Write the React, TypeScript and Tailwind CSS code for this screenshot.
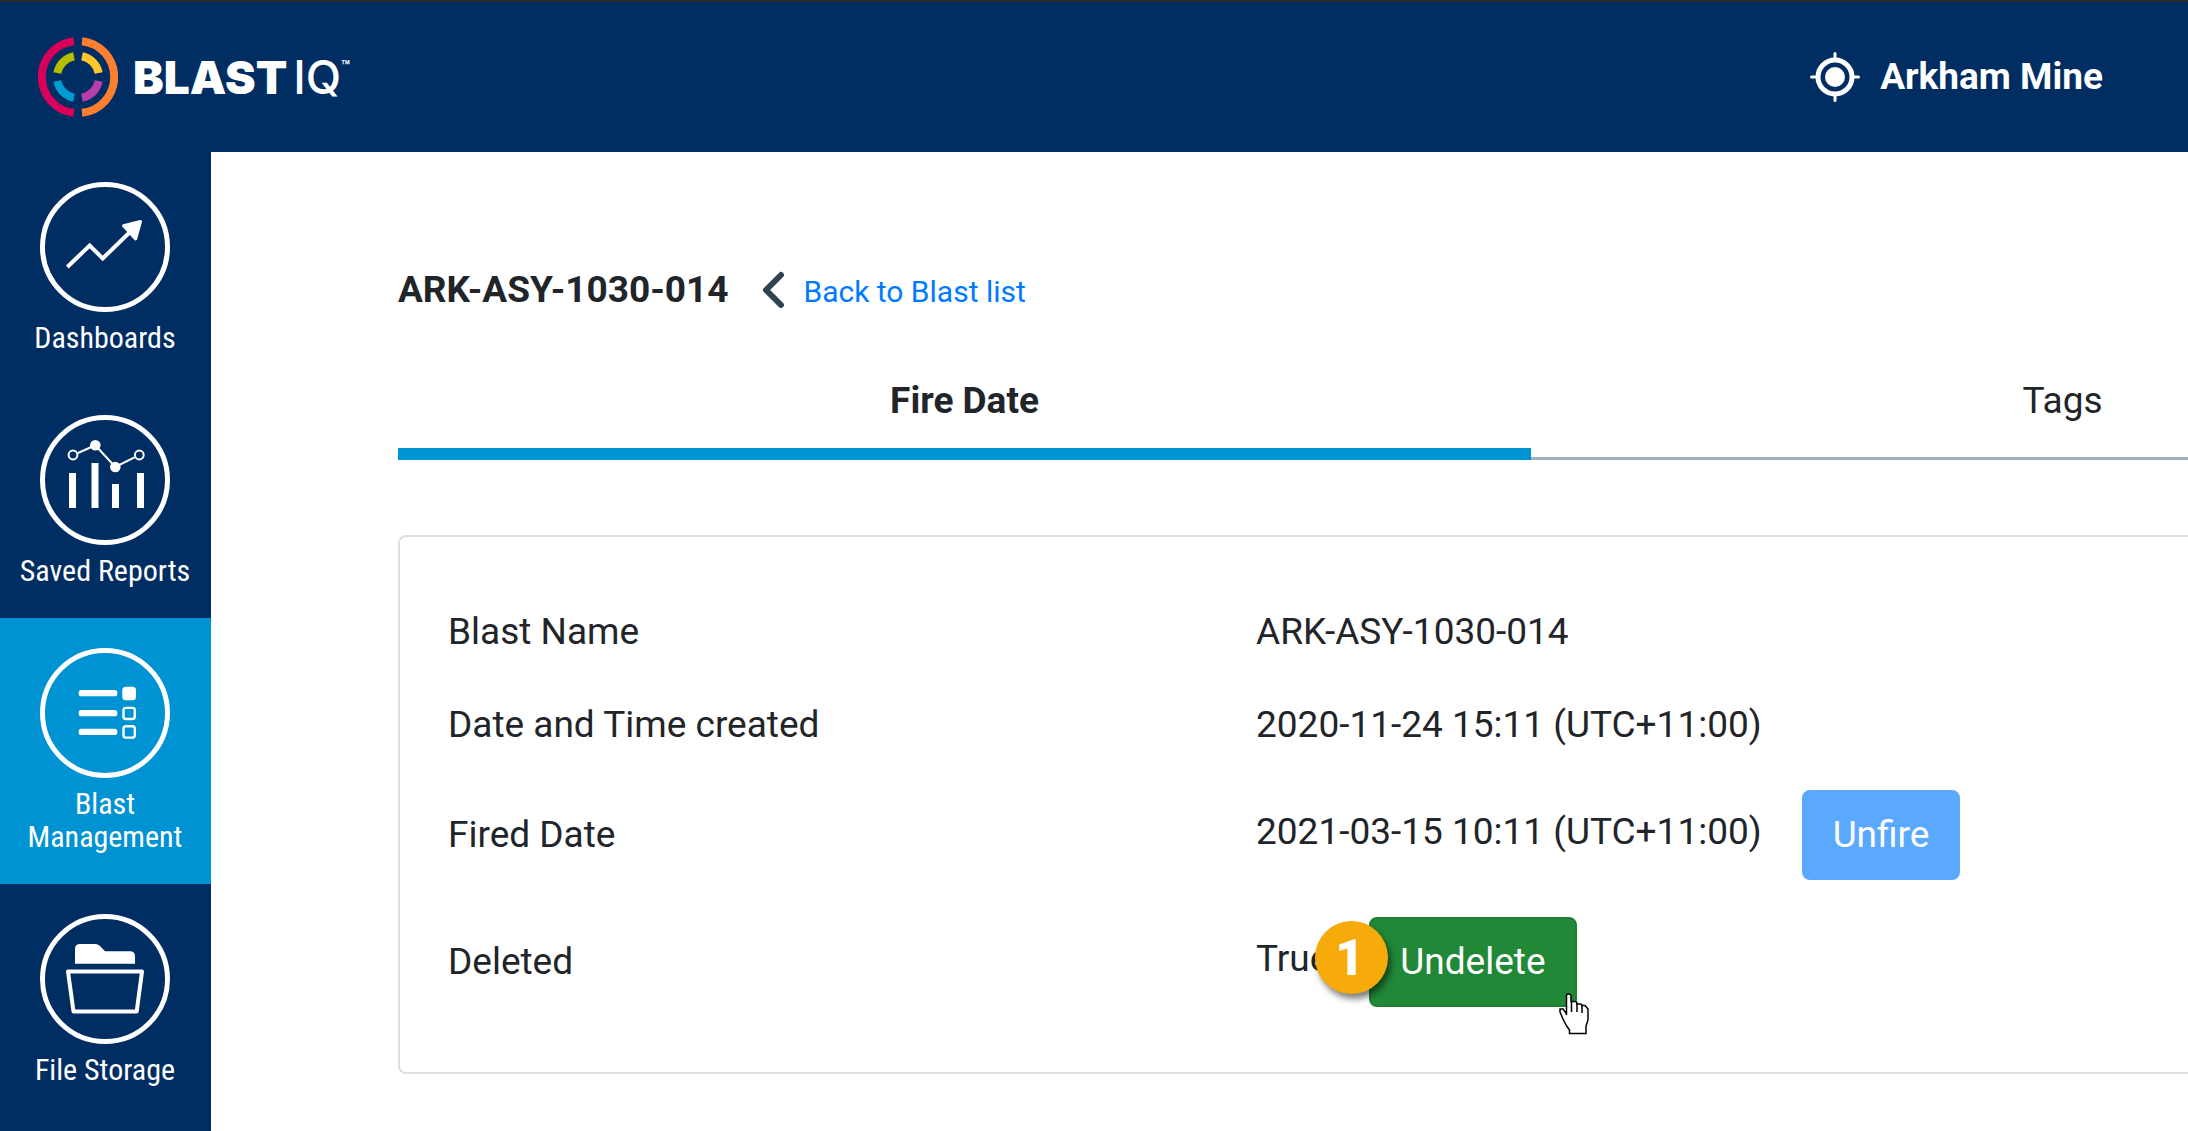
import type { ReactNode } from 'react';

interface NavItem {
  label: string;
  icon: ReactNode;
  active?: boolean;
}

function DashboardsIcon() {
  return (
    <>
      <path d="M27.3 85 49.7 63.5 62.7 76.5 90 50" fill="none" stroke="currentColor" strokeWidth="4" />
      <path d="M100.5 39.5 83.5 43.8 95.6 57Z" fill="currentColor" stroke="currentColor" strokeWidth="3" strokeLinejoin="round" />
    </>
  );
}

function ReportsIcon() {
  return (
    <>
      <path d="M38 38 55.3 30.3 75.3 52 94.5 42.3" fill="none" stroke="currentColor" strokeWidth="2" />
      <g fill="currentColor">
        <circle cx="55.3" cy="30.3" r="5.3" />
        <circle cx="75.3" cy="52" r="5.3" />
        <rect x="29" y="58" width="7" height="35" />
        <rect x="51.5" y="48" width="7" height="45" />
        <rect x="72" y="69" width="7" height="24" />
        <rect x="97" y="58" width="7" height="35" />
      </g>
      <g fill="none" stroke="currentColor" strokeWidth="2">
        <circle cx="33" cy="40" r="4.4" />
        <circle cx="99.3" cy="40" r="4.4" />
      </g>
    </>
  );
}

function BlastIcon() {
  return (
    <>
      <g fill="currentColor">
        <rect x="38.7" y="42" width="38.6" height="6.3" rx="2.6" />
        <rect x="38.7" y="62" width="38.6" height="6.3" rx="2.6" />
        <rect x="38.7" y="80.7" width="38.6" height="6.3" rx="2.6" />
        <rect x="82.3" y="38.7" width="13.7" height="13.5" rx="3.5" />
      </g>
      <g fill="none" stroke="currentColor" strokeWidth="2.4">
        <rect x="83.5" y="59.9" width="11.3" height="11.1" rx="2.4" />
        <rect x="83.5" y="78.3" width="11.3" height="11.3" rx="2.4" />
      </g>
    </>
  );
}

function StorageIcon() {
  return (
    <>
      <path d="M35 49.7V35q0-5 5-5h15q3 0 5 2l5 5.3h25q5 0 5 5v7.4Z" fill="currentColor" />
      <path d="M28 57.5H102L96.7 97.5H33.5Z" fill="none" stroke="currentColor" strokeWidth="4" strokeLinejoin="round" />
    </>
  );
}

const navItems: NavItem[] = [
  { label: 'Dashboards', icon: <DashboardsIcon /> },
  { label: 'Saved Reports', icon: <ReportsIcon /> },
  { label: 'Blast Management', icon: <BlastIcon />, active: true },
  { label: 'File Storage', icon: <StorageIcon /> },
];

function Logo() {
  return (
    <a href="#" className="flex items-center gap-[15px] text-white">
      <svg viewBox="0 0 80 80" className="h-20 w-20" fill="none">
        <g strokeWidth="8">
          <path d="M36 4.2a36 36 0 0 0 0 71.6" stroke="#d9005b" />
          <path d="M44 4.2a36 36 0 0 1 0 71.6" stroke="#ff7f30" />
          <path d="M36 19.3A21 21 0 0 0 19.3 36" stroke="#b4bd00" />
          <path d="M44 19.3A21 21 0 0 1 60.7 36" stroke="#ffc729" />
          <path d="M36 60.7A21 21 0 0 1 19.3 44" stroke="#009bd2" />
          <path d="M44 60.7A21 21 0 0 0 60.7 44" stroke="#b93cab" />
        </g>
      </svg>
      <span className="flex items-start font-['Inter',sans-serif] text-[46px] leading-[46px]">
        <span className="font-black">BLAST</span>
        <span className="pl-1.5 font-medium">IQ</span>
        <span className="text-[14px] leading-6 font-bold">™</span>
      </span>
    </a>
  );
}

function TargetIcon() {
  return (
    <svg viewBox="0 0 50 50" className="h-[50px] w-[50px]" fill="none" stroke="currentColor">
      <circle cx="25" cy="25" r="17" strokeWidth="5" />
      <circle cx="25" cy="25" r="10" fill="currentColor" stroke="none" />
      <path d="M25 1.5V7M25 43v5.5M1.5 25H7M43 25h5.5" strokeWidth="3" strokeLinecap="round" />
    </svg>
  );
}

function HandCursor() {
  return (
    <svg viewBox="0 0 30 42" className="absolute -right-[14px] top-[74px] h-[42px] w-[30px]">
      <path
        d="M7.5 22V2.5Q7.5 1 9.5 1T12 2.5V8.5H16Q18 8.5 18 11H21Q23 11 23 12.5H26L29 16V27L27 33V40.5H10.5V37L8 33.5 4 26 1 19V16H4L7 20Z"
        fill="#fff"
        stroke="#000"
        strokeWidth="1.5"
      />
      <path d="M12.5 8V19M18 10V19M23 12V20" stroke="#000" strokeWidth="1.5" />
    </svg>
  );
}

export default function App() {
  return (
    <div className="flex min-h-screen flex-col overflow-hidden bg-white font-['Roboto',sans-serif] text-[37px] leading-[56px] text-[#212529]">
      {/* Top bar */}
      <header className="flex h-[152px] items-center justify-between border-t-2 border-[#2b2b2b] bg-[#002d62] pr-[85px] pl-[38px] text-white">
        <Logo />
        <div className="flex items-center gap-5 font-bold">
          <TargetIcon />
          <span>Arkham Mine</span>
        </div>
      </header>

      <div className="flex grow">
        {/* Sidebar */}
        <nav className="w-[211px] shrink-0 bg-[#002d62] text-white">
          {navItems.map(item => (
            <a
              key={item.label}
              href="#"
              className={`flex flex-col items-center gap-[9px] pt-[30px] pr-2 pb-[31px] pl-[7px] text-center font-['Roboto_Condensed','Roboto',sans-serif] text-[30px] leading-[33px] ${item.active ? 'bg-[#0093d3]' : ''}`}
            >
              <svg viewBox="0 0 130 130" className="h-[130px] w-[130px]">
                <circle cx="65" cy="65" r="62.5" fill="none" stroke="currentColor" strokeWidth="5" />
                {item.icon}
              </svg>
              <span>{item.label}</span>
            </a>
          ))}
        </nav>

        <main className="min-w-0 grow overflow-hidden pt-[110px] pl-[187px]">
          {/* Title row */}
          <div className="flex items-start">
            <h1 className="font-bold">ARK-ASY-1030-014</h1>
            <a href="#" className="flex h-14 items-center gap-[18px] pl-[33px] text-[30px] text-[#007bff]">
              <svg viewBox="0 0 24 38" className="h-[38px] w-6" fill="none" stroke="#2f4350" strokeWidth="6" strokeLinecap="round" strokeLinejoin="round">
                <path d="M20 4 5 19 20 34" />
              </svg>
              <span className="pt-1">Back to Blast list</span>
            </a>
          </div>

          {/* Tabs */}
          <div role="tablist" className="mt-[54px] flex h-[88px]">
            <button role="tab" aria-selected="true" className="w-[1133px] shrink-0 border-b-[12px] border-[#0093d3] pb-[18px] font-bold">
              Fire Date
            </button>
            <button role="tab" aria-selected="false" className="w-[1063px] shrink-0 border-b-[3px] border-[#9eb0bb] pb-[27px]">
              Tags
            </button>
          </div>

          {/* Blast details */}
          <dl className="mt-[75px] grid grid-cols-[808px_1fr] items-center gap-y-[37px] rounded-l-lg border-2 border-r-0 border-[#dfdfdf] pt-[67px] pb-[65px] pl-12">
            <dt>Blast Name</dt>
            <dd>ARK-ASY-1030-014</dd>
            <dt>Date and Time created</dt>
            <dd>2020-11-24 15:11 (UTC+11:00)</dd>
            <dt>Fired Date</dt>
            <dd className="flex items-center gap-10">
              <span className="pb-[6px]">2021-03-15 10:11 (UTC+11:00)</span>
              <button className="h-[90px] rounded-lg border-2 border-[#5aa9ff] bg-[#5aa9ff] px-[29px] text-white">Unfire</button>
            </dd>
            <dt>Deleted</dt>
            <dd className="flex items-center gap-10">
              <span className="pb-[6px]">True</span>
              <button className="relative h-[90px] rounded-lg border-2 border-[#1e7e34] bg-[#218838] px-[29px] text-white">
                Undelete
                <span className="absolute top-[2px] -left-[56px] flex h-[73px] w-[73px] items-center justify-center rounded-full bg-[#f7ab0a] pr-1 text-[50px] font-black shadow-[3px_5px_6px_rgba(0,0,0,0.5)]">
                  1
                </span>
                <HandCursor />
              </button>
            </dd>
          </dl>
        </main>
      </div>
    </div>
  );
}
